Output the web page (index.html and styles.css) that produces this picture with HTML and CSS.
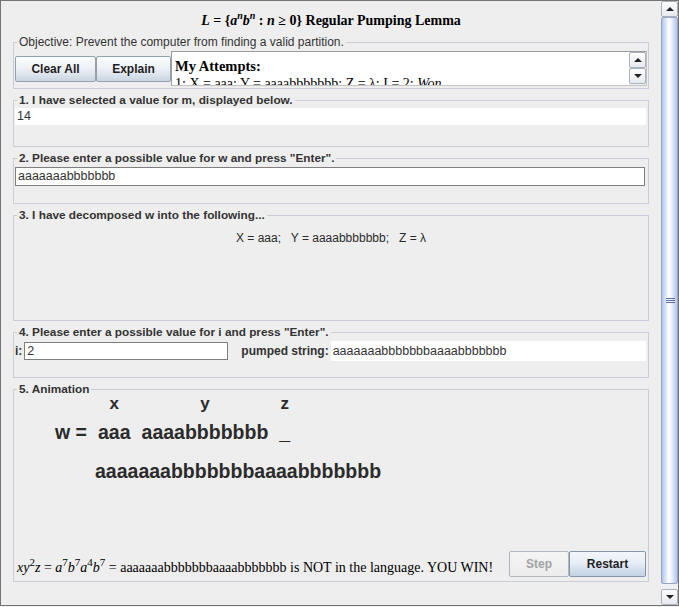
FILE: index.html
```html
<!DOCTYPE html>
<html>
<head>
<meta charset="utf-8">
<link rel="stylesheet" href="styles.css">
</head>
<body>
<div class="window">
  <div class="content">
    <div class="title"><i>L</i> = {<i>a</i><span class="tsup"><i>n</i></span><i>b</i><span class="tsup"><i>n</i></span> : <i>n</i> ≥ 0} Regular Pumping Lemma</div>

    <fieldset class="group g-obj">
      <legend class="obj-legend">Objective: Prevent the computer from finding a valid partition.</legend>
      <div class="obj-row">
        <button class="btn btn-clear">Clear All</button>
        <button class="btn btn-explain">Explain</button>
        <div class="attempts">
          <div class="attempts-text">
            <div class="att-head">My Attempts:</div>
            <div class="att-line">1: X = aaa; Y = aaaabbbbbbb; Z = λ; I = 2; <i>Won</i></div>
          </div>
          <div class="mini-scroll">
            <div class="sbtn"><span class="tri-up"></span></div>
            <div class="sbtn"><span class="tri-down"></span></div>
          </div>
        </div>
      </div>
    </fieldset>

    <fieldset class="group g-1">
      <legend>1. I have selected a value for m, displayed below.</legend>
      <div class="field plain f-m">14</div>
    </fieldset>

    <fieldset class="group g-2">
      <legend>2. Please enter a possible value for w and press "Enter".</legend>
      <div class="field boxed f-w">aaaaaaabbbbbbb</div>
    </fieldset>

    <fieldset class="group g-3">
      <legend>3. I have decomposed w into the following...</legend>
      <div class="decomp">X = aaa;&nbsp;&nbsp; Y = aaaabbbbbbb;&nbsp;&nbsp; Z = λ</div>
    </fieldset>

    <fieldset class="group g-4">
      <legend>4. Please enter a possible value for i and press "Enter".</legend>
      <div class="row4">
        <span class="lbl lbl-i">i:</span>
        <div class="field boxed f-i">2</div>
        <span class="lbl lbl-p">pumped string:</span>
        <div class="field plain f-p">aaaaaaabbbbbbbaaaabbbbbbb</div>
      </div>
    </fieldset>

    <fieldset class="group g-5">
      <legend>5. Animation</legend>
      <div class="anim-box">
        <div class="anim">
          <div class="seg seg-w"><span class="seg-l">&nbsp;</span><span class="seg-v">w =</span></div>
          <div class="seg"><span class="seg-l">x</span><span class="seg-v">aaa</span></div>
          <div class="seg"><span class="seg-l">y</span><span class="seg-v">aaaabbbbbbb</span></div>
          <div class="seg"><span class="seg-l">z</span><span class="seg-v">_</span></div>
        </div>
        <div class="pumped">aaaaaaabbbbbbbaaaabbbbbbb</div>
        <div class="bottom-row">
          <div class="result"><i>xy</i><span class="sup">2</span><i>z</i> = <i>a</i><span class="sup">7</span><i>b</i><span class="sup">7</span><i>a</i><span class="sup">4</span><i>b</i><span class="sup">7</span> = aaaaaaabbbbbbbaaaabbbbbbb is NOT in the language. YOU WIN!</div>
          <div class="btn-pair">
            <button class="btn btn-step" disabled>Step</button>
            <button class="btn btn-restart">Restart</button>
          </div>
        </div>
      </div>
    </fieldset>
  </div>

  <div class="vscroll">
    <div class="sbtn big"><span class="tri-up"></span></div>
    <div class="thumb"><span class="grip"></span></div>
    <div class="track"></div>
    <div class="sbtn big"><span class="tri-down"></span></div>
  </div>
</div>
</body>
</html>
```

FILE: styles.css
```css
html, body {
  margin: 0;
  padding: 0;
  background: #eeeeee;
}

body {
  font-family: "Liberation Sans", Arial, sans-serif;
  color: #333333;
}

.window {
  width: 679px;
  height: 606px;
  box-sizing: border-box;
  border: 1px solid #747474;
  display: flex;
  background: #eeeeee;
  overflow: hidden;
}

.content {
  flex: 1;
  min-width: 0;
  padding: 0 12px;
  display: flex;
  flex-direction: column;
  gap: 4px;
}

.title {
  height: 34px;
  box-sizing: border-box;
  padding-top: 12px;
  margin-bottom: -4px;
  text-align: center;
  font-family: "Liberation Serif", "Times New Roman", serif;
  font-weight: bold;
  font-size: 14px;
  line-height: 16px;
  color: #000;
}

.tsup {
  font-size: 10px;
  position: relative;
  top: -6px;
  line-height: 0;
}

/* titled panels */
.group {
  margin: 0;
  padding: 0;
  border: 1px solid #c9ced6;
  min-width: 0;
  box-sizing: border-box;
}

.group legend {
  margin-left: 3px;
  padding: 0 2px;
  font-weight: bold;
  font-size: 11.8px;
  line-height: 14px;
  color: #333;
}

.group legend.obj-legend {
  font-weight: normal;
  font-size: 12px;
  color: #333;
}

.g-obj { height: 54px; }
.g-1 { height: 54px; }
.g-2 { height: 53px; }
.g-3 { height: 113px; }
.g-4 { height: 53px; }
.g-5 { height: 200px; }

/* objective row */
.obj-row {
  display: flex;
  align-items: center;
  padding-top: 2px;
  padding-left: 1px;
  padding-right: 1px;
}

.btn {
  font-family: "Liberation Sans", Arial, sans-serif;
  font-weight: bold;
  font-size: 12px;
  color: #1f1f1f;
  height: 26px;
  padding: 0;
  margin: 0;
  border: 1px solid #95a0ad;
  border-radius: 2px;
  background: linear-gradient(#fbfcfd 0%, #eef2f6 45%, #dbe3ec 75%, #c9d4e1 100%);
}

.btn-clear { width: 81px; }
.btn-explain { width: 75px; }

.attempts {
  flex: 1;
  height: 35px;
  box-sizing: border-box;
  border: 1px solid #9c9c9c;
  border-right-color: #c3c3c3;
  border-bottom-color: #c3c3c3;
  background: #fff;
  display: flex;
  overflow: hidden;
}

.attempts-text {
  flex: 1;
  padding: 5px 0 0 3px;
  font-family: "Liberation Serif", "Times New Roman", serif;
  font-size: 14px;
  line-height: 17px;
  color: #000;
  overflow: hidden;
  white-space: nowrap;
}

.att-head {
  font-weight: bold;
  font-size: 14.5px;
  line-height: 18px;
}

.mini-scroll {
  width: 17px;
  display: flex;
  flex-direction: column;
  background: #f2f2f2;
}

.sbtn {
  height: 16px;
  box-sizing: border-box;
  border: 1px solid #a9b1bc;
  border-radius: 2px;
  background: linear-gradient(#fdfdfd, #e6eaef);
  display: flex;
  align-items: center;
  justify-content: center;
}

.tri-up, .tri-down {
  width: 0;
  height: 0;
  border-left: 4px solid transparent;
  border-right: 4px solid transparent;
}
.tri-up { border-bottom: 4px solid #222; }
.tri-down { border-top: 4px solid #222; }

/* fields */
.field {
  box-sizing: border-box;
  font-size: 12.5px;
  color: #333;
  white-space: nowrap;
  background: #fff;
}

.plain { border: none; }
.boxed { border: 1px solid #7f7f7f; }

.f-m {
  margin: 1px 2px 0 1px;
  height: 17px;
  line-height: 17px;
  padding-left: 2px;
}

.f-w {
  margin: 2px 3px 0 1px;
  height: 19px;
  line-height: 17px;
  padding-left: 2px;
}

.decomp {
  margin-top: 8px;
  text-align: center;
  font-size: 12px;
  line-height: 16px;
  color: #2b2b2b;
}

.row4 {
  display: flex;
  align-items: center;
  height: 20px;
  margin-top: 2px;
}

.lbl {
  font-weight: bold;
  font-size: 12px;
  color: #333;
}

.lbl-i { margin-left: 1px; margin-right: 2px; }

.f-i {
  width: 204px;
  height: 18px;
  line-height: 16px;
  padding-left: 2px;
}

.lbl-p { margin-left: 13px; margin-right: 2px; }

.f-p {
  flex: 1;
  height: 20px;
  line-height: 20px;
  margin-right: 2px;
  padding-left: 2px;
}

/* animation */
.anim-box {
  height: 185px;
  display: flex;
  flex-direction: column;
}

.anim {
  display: flex;
  gap: 11px;
  margin-left: 41px;
}

.seg {
  display: flex;
  flex-direction: column;
  align-items: center;
}

.seg-l {
  font-weight: bold;
  font-size: 17px;
  line-height: 16px;
  color: #2b2b2b;
}

.seg-v {
  margin-top: 8px;
  font-weight: bold;
  font-size: 19.5px;
  line-height: 24px;
  color: #2b2b2b;
}

.pumped {
  margin-top: 15px;
  margin-left: 81px;
  font-weight: bold;
  font-size: 19.5px;
  line-height: 24px;
  color: #2b2b2b;
}

.bottom-row {
  margin-top: auto;
  margin-bottom: 4px;
  display: flex;
  align-items: center;
}

.result {
  flex: 1;
  padding-left: 3px;
  padding-top: 7px;
  font-family: "Liberation Serif", "Times New Roman", serif;
  font-size: 14px;
  line-height: 16px;
  color: #000;
  white-space: nowrap;
}

.sup {
  font-size: 11px;
  position: relative;
  top: -6px;
  line-height: 0;
}

.btn-pair {
  display: flex;
  margin-right: 2px;
}

.btn-step {
  width: 60px;
  color: #a3a3a3;
  border-color: #b0b6bd;
  background: linear-gradient(#f4f4f4, #ececec);
}

.btn-restart {
  width: 77px;
  border-color: #8595aa;
  background: linear-gradient(#f3f6fa 0%, #e6edf5 45%, #d3deeb 75%, #c4d2e4 100%);
}

/* main scrollbar */
.vscroll {
  width: 17px;
  display: flex;
  flex-direction: column;
  background: #eef0f3;
}

.thumb {
  flex: 1;
  box-sizing: border-box;
  border: 1px solid #93a5c8;
  border-radius: 2px;
  background: linear-gradient(to right, #b3c4e8 0%, #dbe6fb 25%, #ffffff 45%, #eaf1fd 65%, #c7d6f2 85%, #b4c5e6 100%);
  display: flex;
  align-items: center;
  justify-content: center;
}

.grip {
  width: 9px;
  height: 6px;
  margin-left: 2px;
  background: repeating-linear-gradient(#5d6f95 0 1px, transparent 1px 2px);
}

.track {
  height: 5px;
}
```
